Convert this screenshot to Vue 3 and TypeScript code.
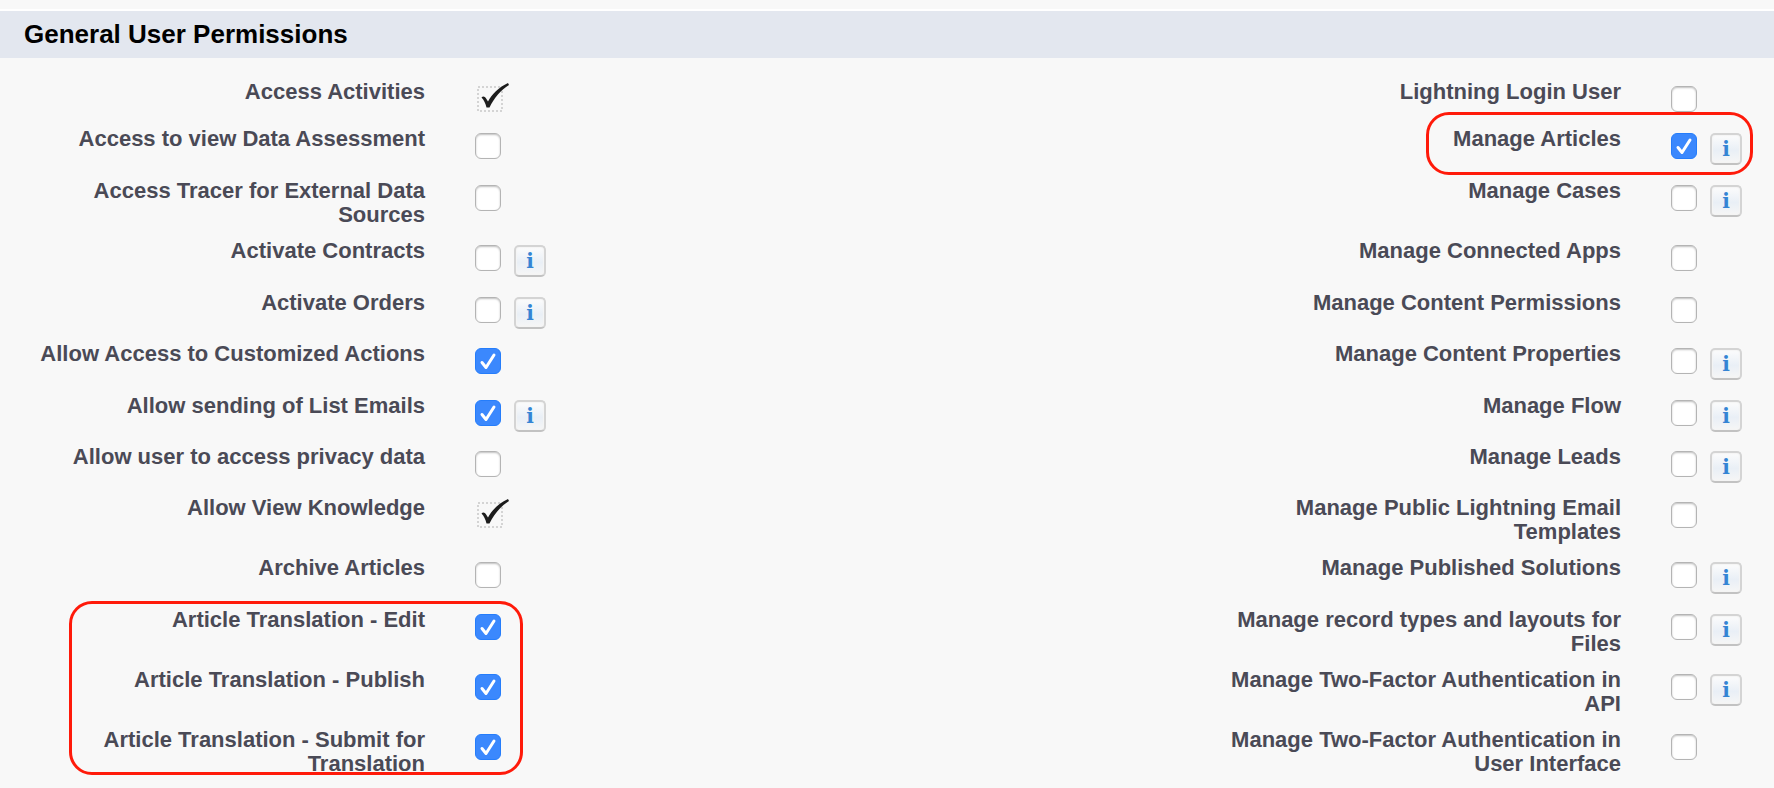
<script setup lang="ts">
import { ref } from 'vue'

interface Permission {
  label: string
  on?: boolean
  locked?: boolean
  info?: boolean
}

const left = ref<Permission[]>([
  { label: 'Access Activities', on: true, locked: true },
  { label: 'Access to view Data Assessment' },
  { label: 'Access Tracer for External Data Sources' },
  { label: 'Activate Contracts', info: true },
  { label: 'Activate Orders', info: true },
  { label: 'Allow Access to Customized Actions', on: true },
  { label: 'Allow sending of List Emails', on: true, info: true },
  { label: 'Allow user to access privacy data' },
  { label: 'Allow View Knowledge', on: true, locked: true },
  { label: 'Archive Articles' },
  { label: 'Article Translation - Edit', on: true },
  { label: 'Article Translation - Publish', on: true },
  { label: 'Article Translation - Submit for Translation', on: true },
])

const right = ref<Permission[]>([
  { label: 'Lightning Login User' },
  { label: 'Manage Articles', on: true, info: true },
  { label: 'Manage Cases', info: true },
  { label: 'Manage Connected Apps' },
  { label: 'Manage Content Permissions' },
  { label: 'Manage Content Properties', info: true },
  { label: 'Manage Flow', info: true },
  { label: 'Manage Leads', info: true },
  { label: 'Manage Public Lightning Email Templates' },
  { label: 'Manage Published Solutions', info: true },
  { label: 'Manage record types and layouts for Files', info: true },
  { label: 'Manage Two-Factor Authentication in API', info: true },
  { label: 'Manage Two-Factor Authentication in User Interface' },
])

const columns = [
  { key: 'left', items: left },
  { key: 'right', items: right },
]
</script>

<template>
  <section class="permissions">
    <h2 class="heading">General User Permissions</h2>
    <div class="grid">
      <template v-for="col in columns" :key="col.key">
        <div v-for="(item, i) in col.items.value" :key="item.label" class="item" :class="col.key">
          <span v-if="item.locked" class="label">{{ item.label }}</span>
          <label v-else class="label" :for="`${col.key}-${i}`">{{ item.label }}</label>
          <div class="controls">
            <svg v-if="item.locked" class="locked" viewBox="0 0 36 32" role="img" aria-label="Checked">
              <rect x="3" y="4" width="24" height="24" fill="none" stroke="#d4d4d4" stroke-width="2" stroke-dasharray="2 2" />
              <path d="M6.5 14.5 C8 12.5 10 13.5 10.800 15 L13 18.500 C17 11 24 4 33 0 L34 2 C26 7 19 15 14.500 24.500 L11.500 24.500 C10.500 20.500 9 17 6.500 14.500 Z" fill="#1c1c1c" />
            </svg>
            <span v-else class="box">
              <input :id="`${col.key}-${i}`" v-model="item.on" type="checkbox" />
              <svg class="mark" viewBox="0 0 26 26" aria-hidden="true">
                <path d="M7 14.5 L11 19.500 L19 7" fill="none" stroke="#fff" stroke-width="3" stroke-linecap="round" stroke-linejoin="round" />
              </svg>
            </span>
            <button v-if="item.info" class="info" type="button" :aria-label="`About ${item.label}`">i</button>
          </div>
        </div>
      </template>
      <div class="highlight translation"></div>
      <div class="highlight articles"></div>
    </div>
  </section>
</template>

<style>
body {
  background: #f8f8f8;
}
</style>

<style scoped>
.permissions {
  padding-top: 9px;
  font-family: "Liberation Sans", Arial, sans-serif;
  font-weight: 700;
  color: #4a4a56;
}

.heading {
  margin: 0;
  padding: 8px 24px;
  border-top: 2px solid #fff;
  background: #e3e7ef;
  color: #000;
  font-size: 26px;
  line-height: 31px;
}

.grid {
  position: relative;
  display: grid;
  grid-template-columns: auto auto;
  grid-template-rows:
    47px 52px 60px 52px 51px 52px 51px 51px 60px 52px 60px 60px 60px;
  grid-auto-flow: column;
  justify-content: space-between;
  padding: 22px 32px 0 25px;
}

.item {
  display: grid;
  grid-template-columns: 400px 71px;
  column-gap: 50px;
  align-items: start;
}

.label {
  font-size: 22px;
  line-height: 24px;
  text-align: right;
}

.controls {
  display: flex;
  align-items: flex-start;
  gap: 13px;
  padding-top: 6px;
}

.box {
  position: relative;
  width: 26px;
  height: 26px;
}

.box input {
  appearance: none;
  display: block;
  box-sizing: border-box;
  width: 26px;
  height: 26px;
  margin: 0;
  border: 1px solid #b4b4b4;
  border-radius: 6px;
  background: #fff;
  box-shadow: inset 0 1px 2px #c0c0c0;
}

.box input:checked {
  border-color: #257dfb;
  background: #3b88fd;
  box-shadow: none;
}

.mark {
  position: absolute;
  inset: 0;
  display: none;
  pointer-events: none;
}

.box input:checked + .mark {
  display: block;
}

.locked {
  width: 36px;
  height: 32px;
  margin-top: -3px;
}

.info {
  box-sizing: border-box;
  width: 32px;
  height: 32px;
  margin: 0;
  padding: 0;
  border: 2px solid #d4d4d4;
  border-bottom-color: #c2c2c2;
  border-radius: 5px;
  background: linear-gradient(#fcfcfc, #e9eff6 55%, #f6f6f6);
  box-shadow: inset 0 0 1px 1px #f4f4f4;
  color: #3484d4;
  font-family: "DejaVu Serif", serif;
  font-weight: 700;
  font-size: 20px;
  line-height: 28px;
  text-align: center;
}

.highlight {
  position: absolute;
  border: 3px solid #ff1a0a;
  border-radius: 23px;
  pointer-events: none;
}

.translation {
  grid-column: 1 / 2;
  grid-row: 11 / 14;
  inset: -7px 23px 13px 44px;
}

.articles {
  grid-column: 2 / 3;
  grid-row: 2 / 3;
  inset: -15px -11px 4px 205px;
}
</style>
